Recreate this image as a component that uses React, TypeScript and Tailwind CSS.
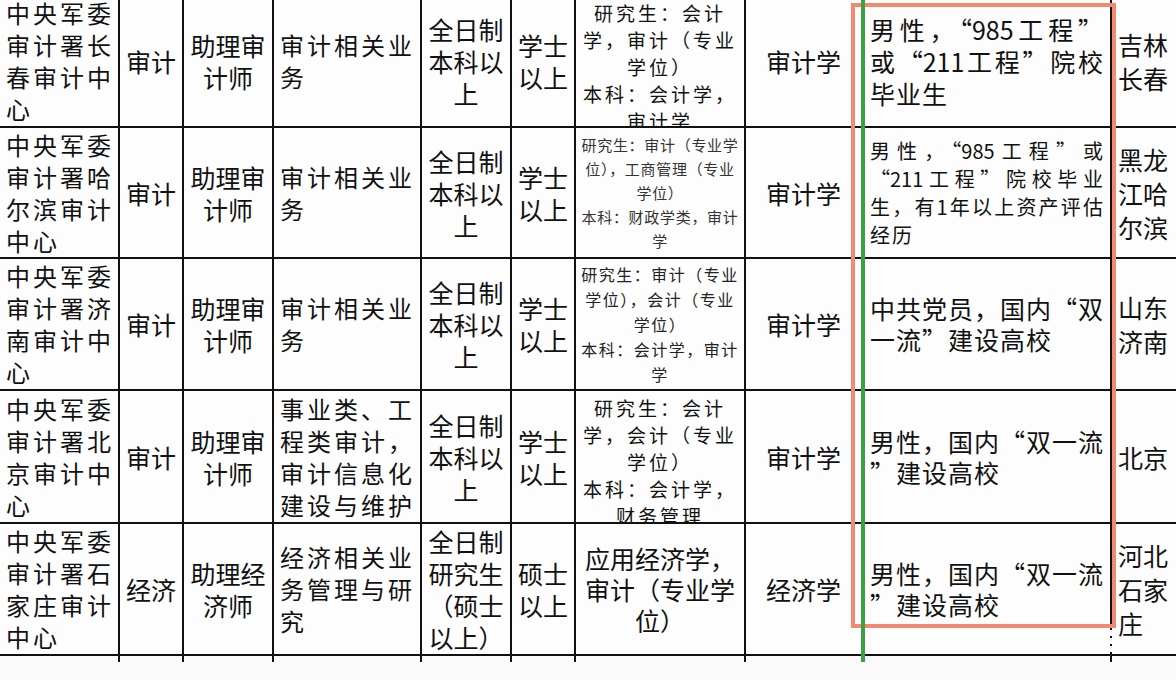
import React from "react";

type CellDef = { lines: string[]; cls?: string; top?: boolean; jw?: boolean };

const COLS = [
  "w-[120px] pl-[6px] items-start text-[24px] leading-[32px] tracking-[3px]",
  "w-[64px] items-center text-[25px] leading-[32px]",
  "w-[90px] items-center text-[25px] leading-[32px]",
  "w-[148px] pl-[6px] items-start text-[24px] leading-[32px] tracking-[3px]",
  "w-[90px] items-center text-[25px] leading-[32px]",
  "w-[64px] items-center text-[25px] leading-[32px]",
  "w-[170px] items-center",
  "w-[117px] items-center text-[25px] leading-[32px]",
  "w-[249px] pl-[7px] items-start",
  "flex-1 pl-[6px] items-start text-[25px] leading-[34px]",
];

type RowDef = { h: string; cells: CellDef[] };

const C7BIG = "text-[19px] leading-[27px] tracking-[3px]";
const C9BIG = "text-[25px] leading-[31px] tracking-[1px]";

const ROWS: RowDef[] = [
  {
    h: "h-[132px]",
    cells: [
      { lines: ["中央军委", "审计署长", "春审计中", "心"] },
      { lines: ["审计"] },
      { lines: ["助理审", "计师"] },
      { lines: ["审计相关业", "务"] },
      { lines: ["全日制", "本科以", "上"] },
      { lines: ["学士", "以上"] },
      { lines: ["研究生：会计", "学，审计（专业", "学位）", "本科：会计学，", "审计学"], cls: C7BIG, top: true },
      { lines: ["审计学"] },
      { lines: ["男性，“985工程”", "或“211工程”院校", "毕业生"], cls: "text-[25px] leading-[32px] tracking-[1px]", jw: true },
      { lines: ["吉林", "长春"] },
    ],
  },
  {
    h: "h-[131px]",
    cells: [
      { lines: ["中央军委", "审计署哈", "尔滨审计", "中心"] },
      { lines: ["审计"] },
      { lines: ["助理审", "计师"] },
      { lines: ["审计相关业", "务"] },
      { lines: ["全日制", "本科以", "上"] },
      { lines: ["学士", "以上"] },
      {
        lines: ["研究生：审计（专业学", "位），工商管理（专业", "学位）", "本科：财政学类，审计", "学"],
        cls: "text-[15px] leading-[24px] tracking-[0.7px] text-[#333]",
      },
      { lines: ["审计学"] },
      {
        lines: ["男性，“985工程”或", "“211工程”院校毕业", "生，有1年以上资产评估", "经历"],
        cls: "text-[20px] leading-[28px] tracking-[2px]",
        jw: true,
      },
      { lines: ["黑龙", "江哈", "尔滨"] },
    ],
  },
  {
    h: "h-[132px]",
    cells: [
      { lines: ["中央军委", "审计署济", "南审计中", "心"] },
      { lines: ["审计"] },
      { lines: ["助理审", "计师"] },
      { lines: ["审计相关业", "务"] },
      { lines: ["全日制", "本科以", "上"] },
      { lines: ["学士", "以上"] },
      {
        lines: ["研究生：审计（专业", "学位），会计（专业", "学位）", "本科：会计学，审计", "学"],
        cls: "text-[16px] leading-[25px] tracking-[1.5px] text-[#222]",
      },
      { lines: ["审计学"] },
      { lines: ["中共党员，国内“双", "一流”建设高校"], cls: C9BIG, jw: true },
      { lines: ["山东", "济南"] },
    ],
  },
  {
    h: "h-[133px]",
    cells: [
      { lines: ["中央军委", "审计署北", "京审计中", "心"] },
      { lines: ["审计"] },
      { lines: ["助理审", "计师"] },
      { lines: ["事业类、工", "程类审计，", "审计信息化", "建设与维护"] },
      { lines: ["全日制", "本科以", "上"] },
      { lines: ["学士", "以上"] },
      { lines: ["研究生：会计", "学，会计（专业", "学位）", "本科：会计学，", "财务管理"], cls: C7BIG, top: true },
      { lines: ["审计学"] },
      { lines: ["男性，国内“双一流", "”建设高校"], cls: C9BIG, jw: true },
      { lines: ["北京"] },
    ],
  },
  {
    h: "h-[132px]",
    cells: [
      { lines: ["中央军委", "审计署石", "家庄审计", "中心"] },
      { lines: ["经济"] },
      { lines: ["助理经", "济师"] },
      { lines: ["经济相关业", "务管理与研", "究"] },
      { lines: ["全日制", "研究生", "（硕士", "以上）"] },
      { lines: ["硕士", "以上"] },
      { lines: ["应用经济学，", "审计（专业学", "位）"], cls: "text-[25px] leading-[31px]" },
      { lines: ["经济学"] },
      { lines: ["男性，国内“双一流", "”建设高校"], cls: C9BIG, jw: true },
      { lines: ["河北", "石家", "庄"] },
    ],
  },
];

function Cell({ col, def }: { col: number; def: CellDef }) {
  const border = col < 9 ? "border-r-2 border-[#111]" : "";
  const just = def.top ? "justify-start pt-[3px]" : "justify-center";
  return (
    <div className={`flex flex-col shrink-0 overflow-hidden ${border} ${COLS[col]} ${just} ${def.cls ?? ""}`}>
      {def.lines.map((l, i) => {
        const justified = def.jw && i < def.lines.length - 1;
        return (
          <div
            key={i}
            className={
              justified
                ? "whitespace-nowrap w-[233px] text-justify [text-align-last:justify] tracking-normal"
                : "whitespace-nowrap"
            }
          >
            {l}
          </div>
        );
      })}
    </div>
  );
}

export default function App() {
  return (
    <div
      lang="zh-CN"
      className="relative w-[1176px] h-[680px] overflow-hidden bg-[#fafafa] text-[#111] font-['Noto_Sans_CJK_SC','Noto_Sans_CJK_JP',sans-serif]"
    >
      <div className="flex flex-col -mt-[4px]">
        {ROWS.map((r, ri) => (
          <div key={ri} className={`flex border-b-2 border-[#111] bg-[#fdfdfd] ${r.h}`}>
            {r.cells.map((c, ci) => (
              <Cell key={ci} col={ci} def={c} />
            ))}
          </div>
        ))}
        <div className="flex h-[6px]">
          {COLS.map((_, ci) => (
            <div
              key={ci}
              className={`shrink-0 ${ci < 9 ? "border-r-2 border-[#111]" : ""} ${COLS[ci].split(" ")[0]}`}
            />
          ))}
        </div>
      </div>
      <div className="absolute left-[851px] top-[3px] w-[265px] h-[625px] border-4 border-[#f28a6f]" />
      <div className="absolute left-[861px] top-0 w-[4px] h-[662px] bg-[#3c9f41]" />
      <div className="absolute left-[1110px] top-[630px] w-[2px] h-[22px] border-l-2 border-dashed border-[#fdfdfd]" />
    </div>
  );
}
